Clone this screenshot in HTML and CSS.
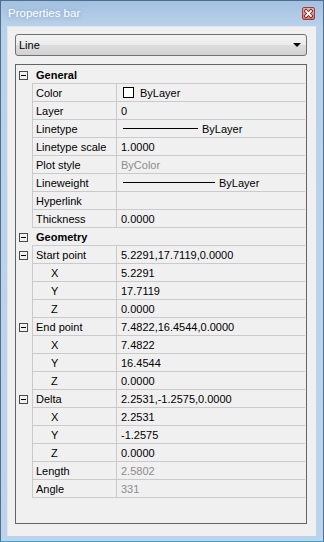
FILE: index.html
```html
<!DOCTYPE html>
<html lang="en">
<head>
  <meta charset="UTF-8">
  <title>Properties bar</title>
  <link rel="stylesheet" href="styles.css">
</head>
<body>

  <div class="window">
    <!-- title bar -->
    <div class="titlebar">
      <span class="title">Properties bar</span>
      <span class="close-btn">
        <svg width="11" height="11" viewBox="0 0 11 11">
          <path d="M3 3 L8 8 M8 3 L3 8" stroke="#6a1f1f" stroke-width="3.4" stroke-linecap="square"/>
          <path d="M3 3 L8 8 M8 3 L3 8" stroke="#ffffff" stroke-width="1.8" stroke-linecap="square"/>
        </svg>
      </span>
    </div>

    <div class="client">
      <div class="combo">
        <span>Line</span>
        <span class="combo-arrow"></span>
      </div>

      <div class="grid">
        <div class="row group">
          <div class="gutter"><span class="minus"></span></div>
          <div class="group-name">General</div>
        </div>
        <div class="row">
          <div class="gutter"></div>
          <div class="name">Color</div>
          <div class="value"><span class="swatch"></span>ByLayer</div>
        </div>
        <div class="row">
          <div class="gutter"></div>
          <div class="name">Layer</div>
          <div class="value">0</div>
        </div>
        <div class="row">
          <div class="gutter"></div>
          <div class="name">Linetype</div>
          <div class="value"><span class="line-sample short"></span>ByLayer</div>
        </div>
        <div class="row">
          <div class="gutter"></div>
          <div class="name">Linetype scale</div>
          <div class="value">1.0000</div>
        </div>
        <div class="row">
          <div class="gutter"></div>
          <div class="name">Plot style</div>
          <div class="value muted">ByColor</div>
        </div>
        <div class="row">
          <div class="gutter"></div>
          <div class="name">Lineweight</div>
          <div class="value"><span class="line-sample long"></span>ByLayer</div>
        </div>
        <div class="row">
          <div class="gutter"></div>
          <div class="name">Hyperlink</div>
          <div class="value"></div>
        </div>
        <div class="row">
          <div class="gutter"></div>
          <div class="name">Thickness</div>
          <div class="value">0.0000</div>
        </div>

        <div class="row group">
          <div class="gutter"><span class="minus"></span></div>
          <div class="group-name">Geometry</div>
        </div>
        <div class="row">
          <div class="gutter"><span class="minus"></span></div>
          <div class="name">Start point</div>
          <div class="value">5.2291,17.7119,0.0000</div>
        </div>
        <div class="row">
          <div class="gutter"></div>
          <div class="name sub">X</div>
          <div class="value">5.2291</div>
        </div>
        <div class="row">
          <div class="gutter"></div>
          <div class="name sub">Y</div>
          <div class="value">17.7119</div>
        </div>
        <div class="row">
          <div class="gutter"></div>
          <div class="name sub">Z</div>
          <div class="value">0.0000</div>
        </div>
        <div class="row">
          <div class="gutter"><span class="minus"></span></div>
          <div class="name">End point</div>
          <div class="value">7.4822,16.4544,0.0000</div>
        </div>
        <div class="row">
          <div class="gutter"></div>
          <div class="name sub">X</div>
          <div class="value">7.4822</div>
        </div>
        <div class="row">
          <div class="gutter"></div>
          <div class="name sub">Y</div>
          <div class="value">16.4544</div>
        </div>
        <div class="row">
          <div class="gutter"></div>
          <div class="name sub">Z</div>
          <div class="value">0.0000</div>
        </div>
        <div class="row">
          <div class="gutter"><span class="minus"></span></div>
          <div class="name">Delta</div>
          <div class="value">2.2531,-1.2575,0.0000</div>
        </div>
        <div class="row">
          <div class="gutter"></div>
          <div class="name sub">X</div>
          <div class="value">2.2531</div>
        </div>
        <div class="row">
          <div class="gutter"></div>
          <div class="name sub">Y</div>
          <div class="value">-1.2575</div>
        </div>
        <div class="row">
          <div class="gutter"></div>
          <div class="name sub">Z</div>
          <div class="value">0.0000</div>
        </div>
        <div class="row">
          <div class="gutter"></div>
          <div class="name">Length</div>
          <div class="value muted">2.5802</div>
        </div>
        <div class="row">
          <div class="gutter"></div>
          <div class="name">Angle</div>
          <div class="value muted">331</div>
        </div>
      </div>
    </div>
  </div>

</body>
</html>
```

FILE: styles.css
```css
body {
  margin: 0;
  font-family: "Liberation Sans", Arial, sans-serif;
  font-size: 11px;
  color: #000;
  background: #fff;
}

.window {
  width: 324px;
  height: 542px;
  box-sizing: border-box;
  border: 1px solid #4f6f91;
  border-bottom-color: #2fa7cf;
  background: linear-gradient(#a4c1e2, #bad1ea 26px, #bdd3eb);
  padding: 0 7px 5px 6px;
  display: flex;
  flex-direction: column;
}

.titlebar {
  height: 25px;
  display: flex;
  align-items: center;
  justify-content: space-between;
}

.title {
  color: #fff;
  font-size: 11.5px;
  margin-left: 1px;
  margin-top: -1px;
  text-shadow: 0 0 4px rgba(90, 130, 180, 0.6);
}

.close-btn {
  width: 11px;
  height: 11px;
  border: 1px solid #a03c3c;
  border-radius: 2px;
  background: linear-gradient(#eeb2a8, #d9786c);
  display: flex;
  margin-right: 1px;
  margin-top: -1px;
}

.client {
  flex: 1;
  background: #f0f0f0;
  border: 1px solid #dde8f4;
  border-width: 1px 0 0 1px;
  padding: 7px 0 0 7px;
}

.combo {
  width: 292px;
  height: 22px;
  box-sizing: border-box;
  border: 1px solid #707070;
  border-radius: 3px;
  background: linear-gradient(#f3f3f3, #ebebeb 50%, #dddddd 50%, #d2d2d2);
  display: flex;
  align-items: center;
  justify-content: space-between;
  padding: 0 5px 0 3px;
}

.combo-arrow {
  width: 0;
  height: 0;
  border-left: 4px solid transparent;
  border-right: 4px solid transparent;
  border-top: 4px solid #000;
}

.grid {
  width: 292px;
  height: 460px;
  box-sizing: border-box;
  margin-top: 8px;
  border: 1px solid #646464;
  padding: 1px 1px 0 0;
}

.row {
  display: grid;
  grid-template-columns: 16px 85px 1fr;
  height: 18px;
}

.gutter {
  display: flex;
  align-items: center;
  padding-left: 3px;
}

.minus {
  width: 7px;
  height: 7px;
  border: 1px solid #4a4a4a;
  position: relative;
}

.minus::after {
  content: "";
  position: absolute;
  left: 1px;
  top: 3px;
  width: 5px;
  height: 1px;
  background: #000;
}

.name,
.value,
.group-name {
  border-bottom: 1px solid #cacaca;
  display: flex;
  align-items: center;
  white-space: nowrap;
}

.name {
  border-left: 1px solid #cacaca;
  border-right: 1px solid #cacaca;
  padding-left: 3px;
}

.name.sub {
  padding-left: 18px;
}

.value {
  padding-left: 4px;
}

.group-name {
  grid-column: 2 / 4;
  font-weight: bold;
  padding-left: 4px;
}

.muted {
  color: #8d8d8d;
}

.swatch {
  width: 11px;
  height: 11px;
  box-sizing: border-box;
  border: 1px solid #000;
  background: #fff;
  margin: 0 6px 0 2px;
}

.line-sample {
  height: 1px;
  background: #000;
  margin: 0 4px 0 2px;
}

.line-sample.short {
  width: 75px;
}

.line-sample.long {
  width: 92px;
}
```
